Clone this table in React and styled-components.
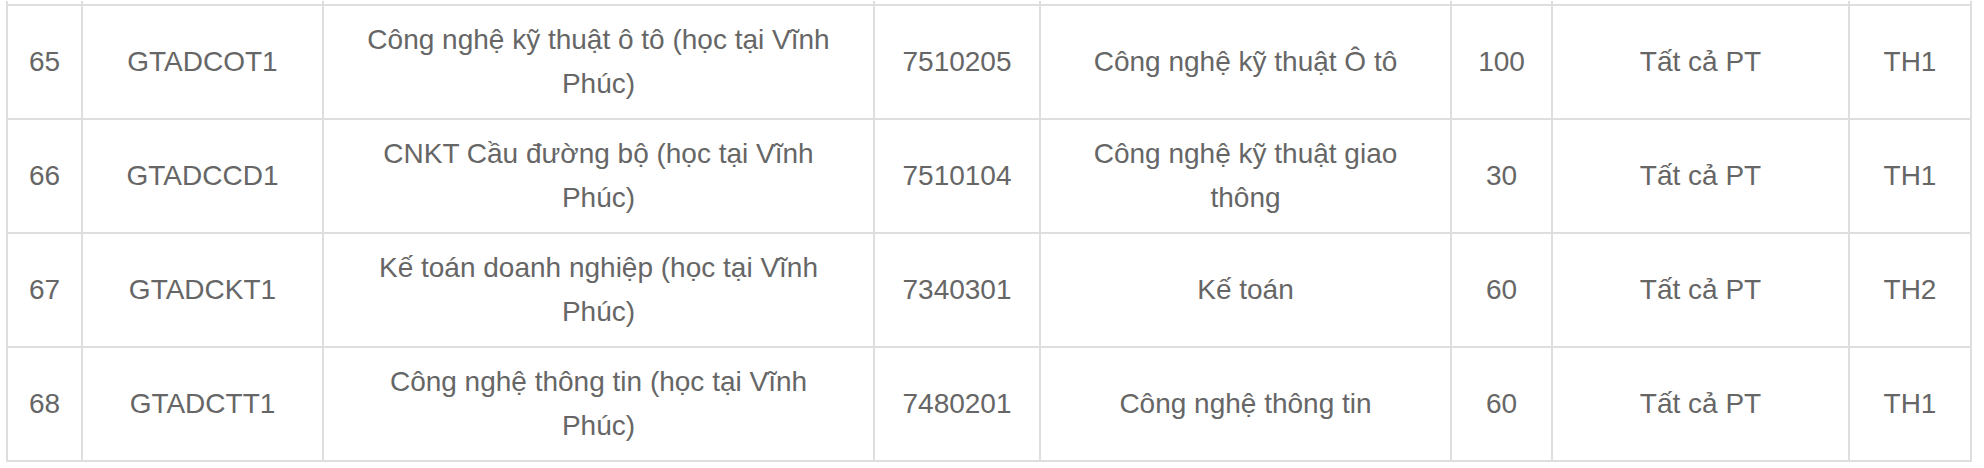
import React from 'react';
import styled, { createGlobalStyle } from 'styled-components';

const GlobalStyle = createGlobalStyle`
  html, body {
    margin: 0;
    padding: 0;
    background: #fff;
  }
  body {
    font-family: "Liberation Sans", Helvetica, Arial, sans-serif;
  }
`;

const Wrapper = styled.div`
  padding: 1px 0 0 6px;
  width: 1984px;
  height: 468px;
  box-sizing: border-box;
  overflow: hidden;
`;

const Table = styled.table`
  border-collapse: collapse;
  table-layout: fixed;
  width: 1964px;
  color: #666;
  font-size: 28px;
`;

const Cell = styled.td`
  border: 2px solid #dedede;
  padding: 12px ${(p) => p.$pad || 6}px;
  height: 88px;
  line-height: 44px;
  text-align: center;
  vertical-align: middle;
`;

const StubCell = styled.td`
  border: 2px solid #dedede;
  border-top: none;
  padding: 0;
  height: 3px;
`;

const columns = [
  { width: 75 },
  { width: 241 },
  { width: 551, pad: 28 },
  { width: 166 },
  { width: 411, pad: 20 },
  { width: 101 },
  { width: 297 },
  { width: 122 },
];

const rows = [
  ['65', 'GTADCOT1', 'Công nghệ kỹ thuật ô tô (học tại Vĩnh Phúc)', '7510205', 'Công nghệ kỹ thuật Ô tô', '100', 'Tất cả PT', 'TH1'],
  ['66', 'GTADCCD1', 'CNKT Cầu đường bộ (học tại Vĩnh Phúc)', '7510104', 'Công nghệ kỹ thuật giao thông', '30', 'Tất cả PT', 'TH1'],
  ['67', 'GTADCKT1', 'Kế toán doanh nghiệp (học tại Vĩnh Phúc)', '7340301', 'Kế toán', '60', 'Tất cả PT', 'TH2'],
  ['68', 'GTADCTT1', 'Công nghệ thông tin (học tại Vĩnh Phúc)', '7480201', 'Công nghệ thông tin', '60', 'Tất cả PT', 'TH1'],
];

const App = () => (
  <>
    <GlobalStyle />
    <Wrapper>
      <Table>
        <colgroup>
          {columns.map((c, i) => (
            <col key={i} style={{ width: c.width }} />
          ))}
        </colgroup>
        <tbody>
          <tr>
            {columns.map((_, i) => (
              <StubCell key={i} />
            ))}
          </tr>
          {rows.map((row) => (
            <tr key={row[0]}>
              {row.map((value, i) => (
                <Cell key={i} $pad={columns[i].pad}>
                  {value}
                </Cell>
              ))}
            </tr>
          ))}
        </tbody>
      </Table>
    </Wrapper>
  </>
);

export default App;
